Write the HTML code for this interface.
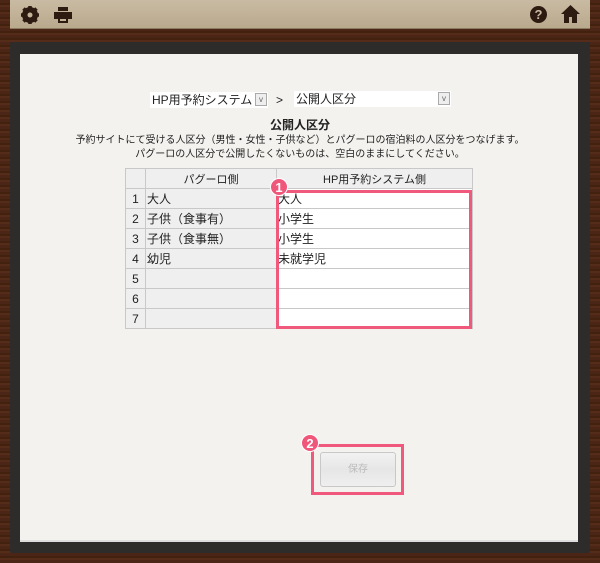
<!DOCTYPE html>
<html><head><meta charset="utf-8"><style>
*{margin:0;padding:0;box-sizing:border-box}
body{width:600px;height:563px;overflow:hidden;background:#4a2617;font-family:"Liberation Sans","Noto Sans CJK JP",sans-serif;position:relative;color:#222}
.wood{position:absolute;inset:0;background:repeating-linear-gradient(0deg,#4b2616 0 3px,#552c1a 3px 5px,#43210f 5px 7px)}
.top{position:absolute;left:10px;top:0;width:580px;height:29px;background:linear-gradient(#c9bba3,#b9a98d);border-bottom:1px solid #8a7a60}
.frame{position:absolute;left:10px;top:42px;width:580px;height:511px;background:#2e2b2b;border-radius:2px}
.paper{position:absolute;left:20px;top:54px;width:558px;height:488px;background:#f3f2ef;border-bottom:2px solid #ddd}
.sel{position:absolute;height:16px;background:#fff;font-size:12px;line-height:16px;padding-left:2px}
.sel i{position:absolute;right:1px;top:1px;width:12px;height:13px;border:1px solid #aaa;background:#eee;font-style:normal;font-size:8px;text-align:center;line-height:11px;color:#666}
.t{position:absolute;left:0;width:600px;text-align:center}
table{position:absolute;left:125px;top:168px;border-collapse:collapse;font-size:12px}
td{border:1px solid #c8c8c8;height:20px;background:#efefef;padding:0 1px}
td.w{background:#fff}
.badge{position:absolute;width:18px;height:18px;border-radius:50%;background:#f0557a;color:#fff;font-weight:bold;font-size:13px;text-align:center;line-height:18px;border:1px solid #fff}
.pk{position:absolute;border:3px solid #f0587c}
</style></head><body>
<div class="wood"></div>
<div class="top">
<svg style="position:absolute;left:11px;top:6px" width="18" height="18" viewBox="0 0 18 18"><circle cx="9" cy="9" r="6" fill="none" stroke="#2d1a10" stroke-width="4"/><g stroke="#2d1a10" stroke-width="3.5"><line x1="9" y1="0" x2="9" y2="18"/><line x1="0" y1="9" x2="18" y2="9"/><line x1="2.5" y1="2.5" x2="15.5" y2="15.5"/><line x1="15.5" y1="2.5" x2="2.5" y2="15.5"/></g><circle cx="9" cy="9" r="2.5" fill="#c3b499"/></svg>
<svg style="position:absolute;left:44px;top:7px" width="18" height="16" viewBox="0 0 18 16"><rect x="4" y="0" width="10" height="4" fill="#2d1a10"/><rect x="0" y="5" width="18" height="7" fill="#2d1a10"/><rect x="4" y="10" width="10" height="6" fill="#2d1a10"/><rect x="6" y="12" width="6" height="2" fill="#c3b499"/></svg>
<div style="position:absolute;left:520px;top:6px;width:17px;height:17px;border-radius:50%;background:#2d1a10;color:#c9bba3;font-weight:bold;font-size:13px;text-align:center;line-height:17px">?</div>
<svg style="position:absolute;left:551px;top:5px" width="19" height="18" viewBox="0 0 19 18"><path d="M9.5 0L0 9h3v9h5v-6h3v6h5V9h3z" fill="#2d1a10"/></svg>
</div>
<div class="frame"></div>
<div class="paper"></div>
<div class="sel" style="left:150px;top:92px;width:118px">HP用予約システム<i>v</i></div>
<div style="position:absolute;left:276px;top:93px;font-size:12px">&gt;</div>
<div class="sel" style="left:294px;top:91px;width:157px">公開人区分<i>v</i></div>
<div class="t" style="top:116px;font-size:12px;font-weight:bold">公開人区分</div>
<div class="t" style="top:131px;font-size:10px">予約サイトにて受ける人区分（男性・女性・子供など）とパグーロの宿泊料の人区分をつなげます。</div>
<div class="t" style="top:145px;font-size:10px">パグーロの人区分で公開したくないものは、空白のままにしてください。</div>
<table>
<tr><td style="width:20px"></td><td style="width:131px;text-align:center;font-size:11px">パグーロ側</td><td style="width:196px;text-align:center;font-size:11px">HP用予約システム側</td></tr>
<tr><td style="text-align:center">1</td><td>大人</td><td class="w">大人</td></tr>
<tr><td style="text-align:center">2</td><td>子供（食事有）</td><td class="w">小学生</td></tr>
<tr><td style="text-align:center">3</td><td>子供（食事無）</td><td class="w">小学生</td></tr>
<tr><td style="text-align:center">4</td><td>幼児</td><td class="w">未就学児</td></tr>
<tr><td style="text-align:center">5</td><td></td><td class="w"></td></tr>
<tr><td style="text-align:center">6</td><td></td><td class="w"></td></tr>
<tr><td style="text-align:center">7</td><td></td><td class="w"></td></tr>
</table>
<div class="pk" style="left:276px;top:190px;width:196px;height:139px"></div>
<div class="badge" style="left:270px;top:178px">1</div>
<div style="position:absolute;left:320px;top:452px;width:76px;height:35px;border:1px solid #c8c8c8;border-radius:3px;background:linear-gradient(#f2f2f2,#e6e6e6 50%,#efefef);color:#bbb;font-size:10px;text-align:center;line-height:33px">保存</div>
<div class="pk" style="left:311px;top:444px;width:93px;height:51px"></div>
<div class="badge" style="left:301px;top:434px">2</div>
</body></html>
